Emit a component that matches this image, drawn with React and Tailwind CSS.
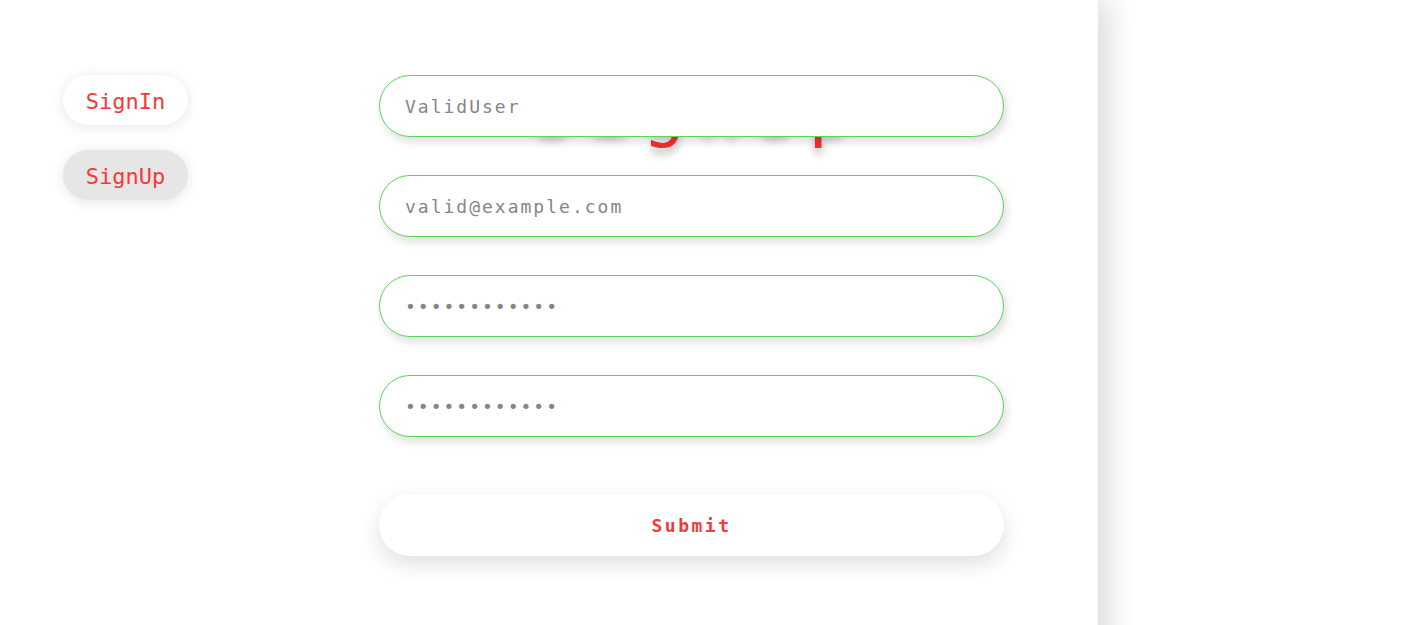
import React from "react";

const mono = { fontFamily: '"DejaVu Sans Mono", "Liberation Mono", monospace' };

function Field({ type = "text", value }) {
  return (
    <input
      type={type}
      defaultValue={value}
      readOnly
      style={mono}
      className="relative z-10 block h-[62px] w-full rounded-full border border-[#58d658] bg-white pl-[25px] pr-6 text-[18px] tracking-[2px] text-[#858585] shadow-[3px_5px_10px_rgba(0,0,0,0.13)] outline-none"
    />
  );
}

export default function App() {
  return (
    <div className="h-[663px] w-full bg-white">
      <div className="flex h-full w-[1098px] bg-white pl-[63px] pt-[75px] shadow-[12px_0_28px_rgba(0,0,0,0.14)]">
        <div className="flex w-[125px] flex-col gap-[25px]">
          <button
            style={mono}
            className="h-[50px] w-[125px] rounded-full bg-white pt-[2px] text-[22px] text-[#f23a3a] shadow-[0_2px_14px_rgba(0,0,0,0.1)]"
          >
            SignIn
          </button>
          <button
            style={mono}
            className="h-[50px] w-[125px] rounded-full bg-[#e6e6e6] pt-[2px] text-[22px] text-[#f23a3a] shadow-[0_2px_14px_rgba(0,0,0,0.1)]"
          >
            SignUp
          </button>
        </div>
        <div className="relative ml-[191px] w-[625px]">
          <h1
            style={mono}
            className="absolute left-0 right-0 top-[-3px] z-0 pl-[12px] text-center text-[72px] leading-none tracking-[12px] text-[#f03030] [text-shadow:0_6px_8px_rgba(0,0,0,0.28)]"
          >
            SignUp
          </h1>
          <div className="flex flex-col gap-[38px]">
            <Field value="ValidUser" />
            <Field value="valid@example.com" />
            <Field type="password" value="password1234" />
            <Field type="password" value="password1234" />
          </div>
          <button
            style={mono}
            className="relative z-10 mt-[57px] block h-[62px] w-full rounded-full bg-white text-[18px] font-bold tracking-[2.5px] text-[#f23a3a] shadow-[0_8px_22px_rgba(0,0,0,0.13)]"
          >
            Submit
          </button>
        </div>
      </div>
    </div>
  );
}
